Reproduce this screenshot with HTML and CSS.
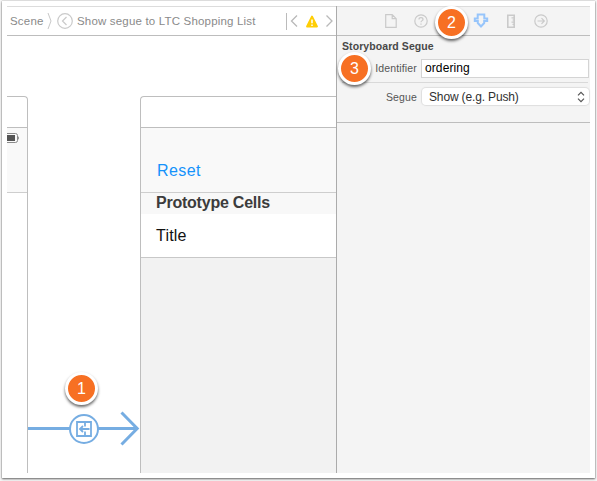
FILE: index.html
```html
<!DOCTYPE html>
<html lang="en">
<head>
<meta charset="utf-8">
<title>Storyboard</title>
<link rel="stylesheet" href="styles.css">
</head>
<body>
<div class="frame">
  <main class="editor">
    <nav class="jumpbar">
      <span class="crumb scene">Scene</span>
      <svg class="sep" width="6" height="20" viewBox="0 0 6 20"><path d="M1 2L4 10L1 18"/></svg>
      <svg class="segue-icon" width="16" height="16" viewBox="0 0 16 16"><circle cx="8" cy="8" r="7.3"/><path d="M9.5 4L5.5 8L9.5 12"/></svg>
      <span class="crumb title">Show segue to LTC Shopping List</span>
      <span class="divider"></span>
      <svg class="chev" width="8" height="14" viewBox="0 0 8 14"><path d="M7 1.5L1.5 7L7 12.5"/></svg>
      <svg class="warn" width="12" height="13" viewBox="0 0 12 13"><path class="tri" d="M6 1.5L11 11.5H1Z"/><path class="mark" d="M6 4.5V8.3M6 9.4V10.9"/></svg>
      <svg class="chev" width="8" height="14" viewBox="0 0 8 14"><path d="M1.5 1.5L7 7L1.5 12.5"/></svg>
    </nav>
    <section class="canvas">
      <div class="scene-box scene-left">
        <div class="scene-head"></div>
        <div class="navbar">
          <svg class="battery" width="13" height="10" viewBox="0 0 13 10"><path class="shell" d="M0 .5H8.5Q10.5 .5 10.5 2.5V7.5Q10.5 9.5 8.5 9.5H0"/><path class="charge" d="M0 2H8V8H0Z"/><path class="charge" d="M11 3Q12.5 5 11 7Z"/></svg>
        </div>
      </div>
      <div class="scene-box scene-right">
        <div class="scene-head"></div>
        <div class="navbar"><span class="reset">Reset</span></div>
        <div class="proto">Prototype Cells</div>
        <div class="cell">Title</div>
        <div class="table-rest"></div>
      </div>
      <svg class="segue" width="113" height="36" viewBox="0 0 113 36">
        <path class="line" d="M0 17.5H108"/>
        <path class="head" d="M93.5 1.5L109.2 17.5L93.5 33.5"/>
        <circle cx="56" cy="18" r="14"/>
        <path class="glyph" d="M57 15.5V11H49V25H63V11H57V15.5M57 20.5V25M61.5 18H52M55 15L52 18L55 21"/>
      </svg>
      <span class="badge one">1</span>
    </section>
  </main>
  <aside class="inspector">
    <div class="tabs">
      <svg width="14" height="16" viewBox="0 0 14 16"><path d="M1.7 1.7H8.2L12.2 5.7V14.3H1.7ZM8.2 1.7V5.7H12.2"/></svg>
      <svg width="14" height="16" viewBox="0 0 14 16"><circle cx="7" cy="8" r="6.2"/><path d="M5 6.5Q5 4.7 7 4.7T9 6.4C9 7.7 7 7.6 7 9.3M7 10.4V11.8"/></svg>
      <span class="tab-gap"></span>
      <svg class="active" width="16" height="16" viewBox="0 0 16 16"><path d="M4.7 1.5H11.3V5.6H14.2V8H11.2V10L8 13.5L4.8 10V8H1.8V5.6H4.7Z"/></svg>
      <svg class="measure" width="14" height="16" viewBox="0 0 14 16"><path class="ruler" d="M3.8 2.2H10.2V14.2H3.8Z"/><path d="M7.5 4.8H10M8.5 7H10M7.5 9.2H10M8.5 11.4H10"/></svg>
      <svg width="14" height="16" viewBox="0 0 14 16"><circle cx="7" cy="8" r="6.2"/><path d="M3.5 8H10M7.5 5.2L10.3 8L7.5 10.8"/></svg>
      <span class="badge two">2</span>
    </div>
    <section class="panel">
      <h2>Storyboard Segue</h2>
      <div class="row identifier"><span class="label">Identifier</span><span class="field">ordering</span></div>
      <div class="row kind"><span class="label">Segue</span><span class="select">Show (e.g. Push)
        <svg width="8" height="12" viewBox="0 0 8 12"><path d="M1 4.3L4 1.3L7 4.3M1 7.7L4 10.7L7 7.7"/></svg></span></div>
      <span class="badge three">3</span>
    </section>
  </aside>
</div>
</body>
</html>
```

FILE: styles.css
```css
* { box-sizing: border-box; }
body {
  margin: 0;
  height: 481px;
  padding: 1px 2px 3px;
  overflow: hidden;
  background: #f6f6f6;
  font-family: "Liberation Sans", Arial, sans-serif;
}
svg { display: block; flex: none; fill: none; }
.frame {
  display: flex;
  width: 593px;
  height: 477px;
  padding: 5px;
  background: #fff;
  box-shadow: 0 1px 2px 0 #666, 0 0 1px #999;
}
.editor { width: 330px; border-right: 1px solid #ababab; }
.inspector { width: 253px; height: 467px; background: #f4f4f4; }
.jumpbar {
  display: flex;
  align-items: center;
  height: 30px;
  padding-left: 3px;
  border-top: 1px solid #dcdcdc;
  border-bottom: 1px solid #bdbdbd;
  color: #8a8a8a;
  font-size: 11.5px;
  white-space: nowrap;
}
.crumb { flex: none; }
.scene { width: 37px; letter-spacing: .2px; }
.title { width: 208px; margin-left: 4px; letter-spacing: .18px; }
.sep { stroke: #c8c8c8; }
.segue-icon { margin-left: 4px; stroke: #cacaca; stroke-width: 1.2; }
.divider { flex: none; width: 1px; height: 17px; margin: 0 3px 0 1px; background: #bbb; }
.chev { stroke: #b9b9b9; stroke-width: 1.3; }
.warn { margin: 0 7px 0 8px; }
.tri { fill: #ffce05; stroke: #ffce05; stroke-width: 1.8; stroke-linejoin: round; }
.mark { stroke: #fff; stroke-width: 1.5; }

.canvas {
  position: relative;
  display: flex;
  justify-content: space-between;
  height: 437px;
  padding-top: 60px;
}
.scene-box { display: flex; flex-direction: column; border-top: 1px solid #bebebe; }
.scene-left { width: 21px; border-right: 1px solid #bebebe; border-top-right-radius: 4px; }
.scene-right { width: 196px; border-left: 1px solid #bebebe; border-top-left-radius: 4px; }
.scene-head { height: 31px; border-bottom: 1px solid #bebebe; }
.navbar { height: 65px; background: #f9f9f9; border-bottom: 1px solid #cecece; }
.battery { margin-top: 5px; }
.shell { stroke: #8a8a8a; stroke-width: 1; }
.charge { fill: #555; }
.reset { display: block; padding: 33px 0 0 16px; font-size: 16px; line-height: 20px; color: #1492fb; letter-spacing: .4px; }
.proto { height: 21px; padding-left: 15px; background: #f8f8f8; color: #3c3c3c; font-size: 16px; font-weight: bold; line-height: 20px; letter-spacing: -.23px; }
.cell { height: 44px; padding-left: 15px; border-bottom: 1px solid #c8c8c8; font-size: 16px; line-height: 43px; color: #111; letter-spacing: .2px; }
.table-rest { flex: 1; background: #f2f2f2; }
.segue { position: absolute; left: 21px; top: 375px; overflow: visible; stroke: #76ade2; }
.line, .head { stroke-width: 3; }
.segue circle { fill: #fff; stroke-width: 2; }
.glyph { stroke-width: 1.8; }

.tabs {
  position: relative;
  display: flex;
  align-items: center;
  height: 30px;
  padding-left: 47px;
  gap: 16px;
  border-top: 1px solid #dcdcdc;
  border-bottom: 1px solid #bdbdbd;
}
.tabs svg { stroke: #cacaca; stroke-width: 1.2; }
.tab-gap { width: 13px; }
.tabs .active { stroke: #97c5fb; stroke-width: 2; }
.tabs .measure { margin: 0 0 0 -1px; }
.tabs .ruler { stroke-width: 1.6; }
.panel { position: relative; height: 87px; padding-top: 2px; border-bottom: 1px solid #bdbdbd; }
h2 { margin: 0 0 0 5px; font-size: 10.5px; line-height: 16px; color: #484848; letter-spacing: .08px; }
.row { display: flex; align-items: center; margin: 0 2px 0 5px; }
.identifier { height: 29px; border-bottom: 1px solid #d9d9d9; }
.kind { height: 27px; }
.label { flex: none; width: 75px; text-align: right; font-size: 10.5px; color: #555; letter-spacing: .15px; }
.field, .select { flex: none; display: flex; align-items: center; width: 168px; margin-left: 4px; height: 19px; background: #fff; font-size: 12px; white-space: nowrap; }
.field { padding-left: 3px; border: 1px solid #d4d4d4; color: #000; letter-spacing: .1px; }
.select { justify-content: space-between; width: 167px; height: 17px; margin-left: 5px; padding: 0 4px 0 7px; border-radius: 4px; box-shadow: 0 0 1px 1px #dedede; color: #303030; letter-spacing: -.15px; }
.select svg { stroke: #555; stroke-width: 1.2; }
.badge {
  position: absolute;
  width: 33px;
  height: 33px;
  border: 3px solid #fff;
  border-radius: 50%;
  background: #f77023;
  box-shadow: 0 2px 3px rgba(0, 0, 0, .6);
  color: #fff;
  font-size: 16px;
  line-height: 27px;
  text-align: center;
}
.one { left: 58px; top: 336px; }
.two { left: 98px; top: -1px; z-index: 1; }
.three { left: 1px; top: 16px; }
```
